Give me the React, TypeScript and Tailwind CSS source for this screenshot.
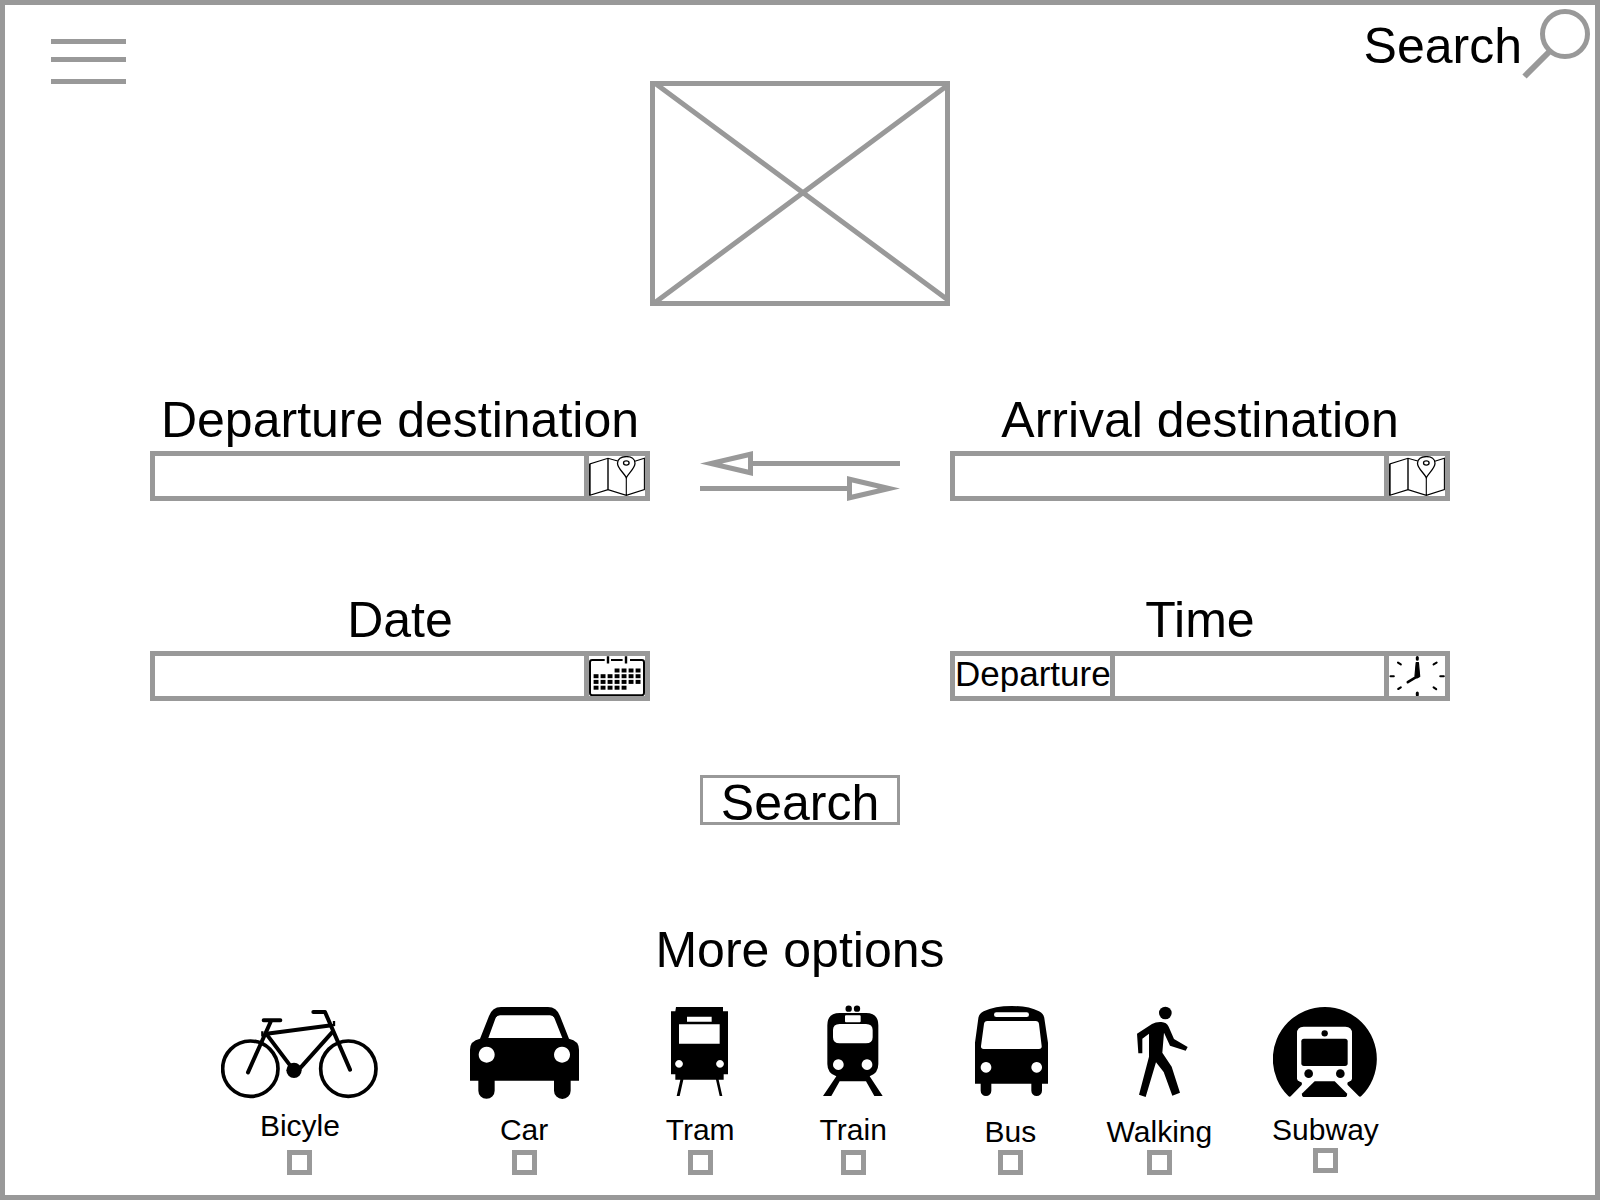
import type { ReactNode } from 'react';

const INK = '#999999';

function MapIcon() {
  return (
    <svg viewBox="0 0 56 40" className="h-10 w-14" fill="none" stroke="#000" strokeWidth="1.1" aria-hidden="true">
      <path d="M28.7 5 19 2.3 .8 8V39.3L19 33.7 37.3 39.3 55.4 33.5V2.3L45.8 5.3M37.3 21.7V39.3" />
      <path d="M19 2.3V33.7M.8 8V39.3" strokeWidth="1.4" />
      <path d="M37.3 21.7C35.5 17.5 28.5 12.5 28.5 7.2C28.5 3 32.3 .6 37.3 .6S46 3 46 7.2C46 12.5 39.1 17.5 37.3 21.7Z" strokeWidth="1.3" />
      <ellipse cx="37.3" cy="7" rx="2.8" ry="2.1" strokeWidth="1.3" />
    </svg>
  );
}

const calendarRows = [
  { y: 12.5, cols: [3, 4, 5, 6] },
  { y: 18.2, cols: [0, 1, 2, 3, 4, 5, 6] },
  { y: 23.9, cols: [0, 1, 2, 3, 4, 5, 6] },
  { y: 29.7, cols: [0, 1, 2, 3, 4] },
];

function CalendarIcon() {
  return (
    <svg viewBox="0 0 56 40" className="h-10 w-14" aria-hidden="true">
      <path
        d="M15.7 4H3.2Q1 4 1 6.2V37Q1 39.2 3.2 39.2H52.8Q55 39.2 55 37V6.2Q55 4 52.8 4H41M22 4H33.6"
        fill="none"
        stroke="#000"
        strokeWidth="2"
      />
      <path d="M19 .2V7.6M37 .2V7.6" stroke="#000" strokeWidth="2.4" />
      {calendarRows.map((row) =>
        row.cols.map((col) => <rect key={`${row.y}-${col}`} x={4.6 + col * 7} y={row.y} width="4.9" height="4" />),
      )}
    </svg>
  );
}

function ClockIcon() {
  return (
    <svg viewBox="0 0 56 40" className="h-10 w-14" stroke="#000" aria-hidden="true">
      <path
        d="M1.5 20.2H4.8M51.3 20.2H54.8M9 6.6 11.8 8.4M47.6 6.6 44.6 8.4M9.2 33 11.8 31.4M44.6 31.4 47.2 33.2"
        strokeWidth="2.1"
        strokeLinecap="round"
      />
      <path d="M28.3 1.5V3.2M28.3 37V39" strokeWidth="3" strokeLinecap="round" />
      <path d="M27.2 6.5H29.4L30.7 20.5 28 22 26 20Z" strokeWidth="1.2" strokeLinejoin="round" />
      <path d="M18.8 26.2 28.3 20.4" strokeWidth="2.6" strokeLinecap="round" />
    </svg>
  );
}

function BicycleIcon() {
  return (
    <svg viewBox="66 45 471 282" className="h-[94px] w-[157px]" fill="none" stroke="#000" aria-hidden="true">
      <circle cx="154" cy="236" r="83" strokeWidth="11" />
      <circle cx="448" cy="236" r="83" strokeWidth="11" />
      <path d="M194 91H244M343 66H378L453 239M216 93 147 247" strokeWidth="12" strokeLinecap="round" strokeLinejoin="round" />
      <path d="M203 131 398 106M203 133 276 230M402 124 302 236" strokeWidth="12" />
      <path d="M190 124V136L204 135M405 93V105L395 107" strokeWidth="7" />
      <circle cx="285" cy="241" r="23" fill="#000" stroke="none" />
    </svg>
  );
}

function CarIcon() {
  return (
    <svg viewBox="810 45 327 282" className="h-[94px] w-[109px]" aria-hidden="true">
      <path
        fillRule="evenodd"
        d="M810 272V179Q810 152 840 146L867 78Q877 51 903 51H1044Q1070 51 1080 78L1107 146Q1137 152 1137 179V272H1112V302A24.500 24.500 0 0 1 1062 302V272H884V302A24.500 24.500 0 0 1 835 302V272ZM865 144H1087L1064 86Q1060 76 1050 76H900Q890 76 886 86ZM860 170a24 24 0 1 0 .1 0ZM1086 170a24 24 0 1 0 .1 0Z"
      />
    </svg>
  );
}

function TramIcon() {
  return (
    <svg viewBox="96 45 171 282" className="h-[94px] w-[57px] overflow-visible" aria-hidden="true">
      <path
        fillRule="evenodd"
        d="M108 51H249V64H264V253H251V269H236L247 318H239L228 269H130L119 318H110L121 269H106V253H93V64H106ZM141 80V95H215V80ZM117 103V161H239V103ZM117 210a11.500 11.500 0 1 0 .1 0ZM240 210a11.500 11.500 0 1 0 .1 0Z"
      />
    </svg>
  );
}

function TrainIcon() {
  return (
    <svg viewBox="550 45 180 282" className="h-[94px] w-[60px]" aria-hidden="true">
      <circle cx="627" cy="56" r="9.500" />
      <circle cx="652" cy="56" r="9.500" />
      <path
        fillRule="evenodd"
        d="M600 69H679Q716 69 716 106V222Q716 250 690 259L729 318H704L679 274H600L575 318H550L590 259Q563 250 563 222V106Q563 69 600 69ZM619 76Q616 76 616 79V94Q616 97 619 97H660Q663 97 663 94V79Q663 76 660 76ZM600 102Q580 102 580 120V142Q580 160 600 160H679Q699 160 699 142V120Q699 102 679 102ZM596 208a16 16 0 1 0 .1 0ZM682 208a16 16 0 1 0 .1 0Z"
      />
    </svg>
  );
}

function BusIcon() {
  return (
    <svg viewBox="72 45 219 282" className="h-[94px] w-[73px] overflow-visible" aria-hidden="true">
      <path
        fillRule="evenodd"
        d="M75 281V158L85 85Q87 71 101 64Q134 48 185 48Q236 48 267 64Q281 71 283 85L294 158V281H276V302A16 16 0 0 1 244 302V281H124V302A16 16 0 0 1 92 302V281ZM139 67Q132 67 132 74T139 81H230Q237 81 237 74T230 67ZM112 93Q103 93 102 102L93 168Q92 177 101 177H267Q276 177 275 168L267 102Q266 93 257 93ZM108 216a16 16 0 1 0 .1 0ZM260 216a16 16 0 1 0 .1 0Z"
      />
    </svg>
  );
}

function WalkingIcon() {
  return (
    <svg viewBox="543 45 171 282" className="h-[94px] w-[57px]" aria-hidden="true">
      <circle cx="646" cy="69" r="19" />
      <path d="M561 131 606 102Q618 95 634 96Q650 97 656 110L672 147 713 171 707 182 660 167 642 128 637 188 665 230 690 308 667 317 641 246 618 217 587 321 567 314 597 200V131L577 146V190H565Z" />
    </svg>
  );
}

function SubwayIcon() {
  return (
    <svg viewBox="99 45 312 282" className="h-[94px] w-[104px]" aria-hidden="true">
      <path d="M145 318A156 156 0 1 1 364 318Q360 322 356 318L323 285Q320 276 327 275Q336 272 336 266V130Q336 110 316 110H191Q171 110 171 130V266Q171 272 180 275Q188 276 185 285L153 318Q149 322 145 318Z" />
      <rect x="184" y="146" width="139" height="82" rx="8" />
      <circle cx="254" cy="130" r="9.500" />
      <circle cx="206" cy="251" r="13" />
      <circle cx="301" cy="251" r="13" />
      <path d="M224 274H284L320 310Q324 317 317 321H190Q183 317 187 310Z" />
    </svg>
  );
}

type Option = { name: string; icon: ReactNode; iconBox: string; text: string };

const options: Option[] = [
  { name: 'Bicyle', icon: <BicycleIcon />, iconBox: 'h-[106px]', text: 'h-[39px]' },
  { name: 'Car', icon: <CarIcon />, iconBox: 'h-[110px]', text: 'h-[35px]' },
  { name: 'Tram', icon: <TramIcon />, iconBox: 'h-[110px]', text: 'h-[35px]' },
  { name: 'Train', icon: <TrainIcon />, iconBox: 'h-[110px]', text: 'h-[35px]' },
  { name: 'Bus', icon: <BusIcon />, iconBox: 'h-[112px]', text: 'h-[33px]' },
  { name: 'Walking', icon: <WalkingIcon />, iconBox: 'h-[112px]', text: 'h-[33px]' },
  { name: 'Subway', icon: <SubwayIcon />, iconBox: 'h-[110px]', text: 'h-[33px]' },
];

type FieldProps = { id: string; label: string; action: string; icon: ReactNode; prefix?: ReactNode };

function Field({ id, label, action, icon, prefix }: FieldProps) {
  return (
    <div className="flex min-w-0 flex-col gap-1.5">
      <label htmlFor={id} className="text-center text-[50px] leading-[50px] whitespace-nowrap">
        {label}
      </label>
      <div className="flex h-[50px] border-5 border-[#999999]">
        {prefix}
        <input id={id} type="text" className="min-w-0 flex-1 px-2 text-3xl outline-none" />
        <button type="button" aria-label={action} className="shrink-0 border-l-5 border-[#999999]">
          {icon}
        </button>
      </div>
    </div>
  );
}

function SwapArrows() {
  return (
    <svg viewBox="0 0 200 50" className="h-[50px] w-[200px]" fill={INK} aria-hidden="true">
      <path fillRule="evenodd" d="M0 12.500 53 0V10H200V15H53V25ZM22 12.500 48 18.500V6.500Z" />
      <path fillRule="evenodd" d="M200 37.500 147 25V35H0V40H147V50ZM178 37.500 152 43.500V31.500Z" />
    </svg>
  );
}

export default function App() {
  return (
    <div className="flex min-h-screen flex-col border-5 border-[#999999] bg-white pb-5 font-['Liberation_Sans',Arial,sans-serif] text-black">
      <header className="grid grid-cols-[1fr_300px_1fr] items-start">
        <button type="button" aria-label="Menu" className="mt-[34px] ml-[46px] flex w-[75px] flex-col">
          <span className="h-[5px] w-full bg-[#999999]" />
          <span className="mt-[13px] h-[5px] w-full bg-[#999999]" />
          <span className="mt-[17px] h-[5px] w-full bg-[#999999]" />
        </button>
        <svg
          viewBox="0 0 300 225"
          className="mt-[76px] h-[225px] w-[300px]"
          fill="none"
          stroke={INK}
          strokeWidth="5"
          role="img"
          aria-label="Logo placeholder"
        >
          <rect x="2.5" y="2.5" width="295" height="220" />
          <path d="M6 3 298 219M3 223 298 4" />
        </svg>
        <button type="button" className="mt-1 mr-[5px] flex items-start justify-self-end">
          <span className="mt-3 text-[50px] leading-[50px]">Search</span>
          <svg viewBox="0 0 68 70" className="h-[70px] w-[68px]" fill="none" stroke={INK} strokeWidth="5" aria-hidden="true">
            <circle cx="43" cy="25" r="22.500" />
            <path d="M28 42 2.500 67.500" strokeWidth="6" />
          </svg>
        </button>
      </header>

      <form className="flex flex-col" onSubmit={(e) => e.preventDefault()}>
        <div className="mt-[89px] grid grid-cols-[5fr_3fr_5fr] items-end gap-y-[94px] px-[145px]">
          <Field id="from" label="Departure destination" action="Pick departure on map" icon={<MapIcon />} />
          <button type="button" aria-label="Swap destinations" className="justify-self-center">
            <SwapArrows />
          </button>
          <Field id="to" label="Arrival destination" action="Pick arrival on map" icon={<MapIcon />} />
          <Field id="date" label="Date" action="Open calendar" icon={<CalendarIcon />} />
          <div />
          <Field
            id="time"
            label="Time"
            action="Pick time"
            icon={<ClockIcon />}
            prefix={
              <select
                aria-label="Time type"
                className="w-[160px] shrink-0 appearance-none border-r-5 border-[#999999] pb-1 text-[35px] leading-9 outline-none"
              >
                <option>Departure</option>
                <option>Arrival</option>
              </select>
            }
          />
        </div>

        <button
          type="submit"
          className="mt-[74px] h-[50px] w-[200px] self-center border-3 border-[#999999] pt-[7px] text-[50px] leading-[37px]"
        >
          Search
        </button>

        <fieldset className="mt-[100px]">
          <legend className="mx-auto text-[50px] leading-[50px]">More options</legend>
          <div className="mt-[30px] grid grid-cols-[240fr_208fr_144fr_162fr_152fr_146fr_186fr] pr-[11.1%] pl-[11%]">
            {options.map((option) => (
              <label key={option.name} className="flex flex-col items-center">
                <span className={option.iconBox}>{option.icon}</span>
                <span className={`text-[30px] leading-[30px] ${option.text}`}>{option.name}</span>
                <input
                  type="checkbox"
                  className="size-[25px] appearance-none border-5 border-[#999999] checked:bg-black"
                />
              </label>
            ))}
          </div>
        </fieldset>
      </form>
    </div>
  );
}
